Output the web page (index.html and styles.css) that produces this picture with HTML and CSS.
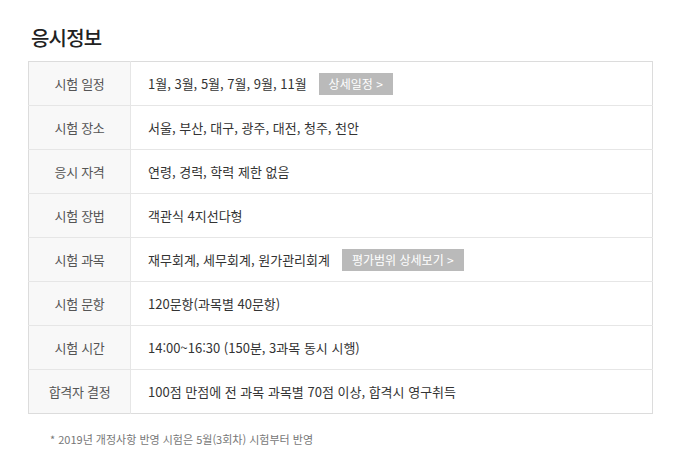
FILE: index.html
```html
<!DOCTYPE html>
<html lang="ko">
<head>
<meta charset="utf-8">
<link rel="stylesheet" href="styles.css">
</head>
<body>
<div class="wrap">
  <h2 class="title">응시정보</h2>
  <table class="info">
    <tr><th>시험 일정</th><td><span class="val">1월, 3월, 5월, 7월, 9월, 11월</span><a class="btn">상세일정 &gt;</a></td></tr>
    <tr><th>시험 장소</th><td>서울, 부산, 대구, 광주, 대전, 청주, 천안</td></tr>
    <tr><th>응시 자격</th><td>연령, 경력, 학력 제한 없음</td></tr>
    <tr><th>시험 장법</th><td>객관식 4지선다형</td></tr>
    <tr><th>시험 과목</th><td><span class="val">재무회계, 세무회계, 원가관리회계</span><a class="btn">평가범위 상세보기 &gt;</a></td></tr>
    <tr><th>시험 문항</th><td>120문항(과목별 40문항)</td></tr>
    <tr><th>시험 시간</th><td>14:00~16:30 (150분, 3과목 동시 시행)</td></tr>
    <tr><th>합격자 결정</th><td>100점 만점에 전 과목 과목별 70점 이상, 합격시 영구취득</td></tr>
  </table>
  <p class="note">* 2019년 개정사항 반영 시험은 5월(3회차) 시험부터 반영</p>
</div>
</body>
</html>
```
FILE: styles.css
```css
html, body {
  margin: 0;
  padding: 0;
  background: #fff;
}
body {
  font-family: "Noto Sans CJK KR", "Noto Sans", sans-serif;
  color: #333;
}
.wrap {
  padding: 24px 28px 0 28px;
  width: 625px;
}
.title {
  margin: 0 0 10px 3px;
  font-size: 20px;
  font-weight: 500;
  line-height: 27px;
  color: #222;
  letter-spacing: -0.8px;
}
.info {
  width: 625px;
  border-collapse: collapse;
  border: 1px solid #dcdcdc;
}
.info tr {
  height: 44px;
}
.info th, .info td {
  border-top: 1px solid #e6e6e6;
  padding: 0;
  font-size: 13px;
  font-weight: 400;
  vertical-align: middle;
}
.info tr:first-child th, .info tr:first-child td {
  border-top: none;
}
.info th {
  width: 101px;
  background: #f8f8f8;
  color: #555;
  text-align: center;
  border-right: 1px solid #e6e6e6;
  letter-spacing: -0.3px;
}
.info td {
  padding-left: 17px;
  color: #333;
}
.val {
  vertical-align: middle;
}
.btn {
  display: inline-block;
  vertical-align: middle;
  margin-left: 12px;
  background: #bababa;
  color: #fff;
  font-size: 12px;
  line-height: 22px;
  padding: 0 10px;
}
.note {
  margin: 17px 0 0 22px;
  font-size: 11px;
  color: #777;
}
```
